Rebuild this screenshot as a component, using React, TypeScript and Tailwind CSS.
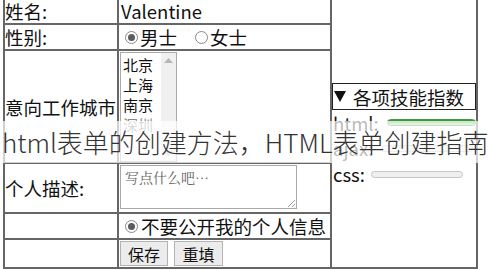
const cell = "bg-white flex items-center whitespace-nowrap";
const cjk = "font-['Noto_Sans_CJK_SC','Noto_Sans',sans-serif]";

function Radio({ checked }: { checked?: boolean }) {
  return (
    <span className="inline-flex w-[13px] h-[13px] rounded-full border border-[#8a8a8a] bg-white items-center justify-center shrink-0">
      {checked && <span className="w-[7px] h-[7px] rounded-full bg-[#5c5c5c]" />}
    </span>
  );
}

function Bar({ full }: { full?: boolean }) {
  return full ? (
    <span className="inline-block w-[89px] h-[7px] rounded-full border border-[#3f9b3f] bg-linear-to-b from-[#2f8f2f] to-[#b4dcb4]" />
  ) : (
    <span className="inline-block w-[92px] h-[7px] rounded-full border border-[#c4c4c4] bg-[#efefef]" />
  );
}

export default function App() {
  return (
    <div className={`relative w-[489px] h-[270px] overflow-hidden bg-white text-[#111] ${cjk}`}>
      <div className="ml-[3px] -mt-[3px] w-[475px] grid grid-cols-[112px_211px_144px] grid-rows-[24px_24px_111px_48px_24px_27px] gap-[2px] p-[2px] bg-[#666] text-[18.5px] leading-[22px]">
        <div className={cell}>姓名:</div>
        <div className={`${cell} pl-[2px]`}>Valentine</div>

        <div className="bg-white row-span-6 col-start-3 row-start-1 flex flex-col pt-[84px] whitespace-nowrap">
          <div className="h-[27px] border border-[#222] flex items-center gap-[7px] pl-[1px]">
            <svg width="12" height="11" viewBox="0 0 12 11">
              <polygon points="0,0 12,0 6,11" fill="#111" />
            </svg>
            <span>各项技能指数</span>
          </div>
          <div className="h-[25px] flex items-center gap-[8px] pl-[1px]">
            <span>html:</span>
            <Bar full />
          </div>
          <div className="h-[26px] flex items-center gap-[8px] pl-[1px]">
            <span>ajax:</span>
            <Bar />
          </div>
          <div className="h-[26px] flex items-center gap-[6px] pl-[1px]">
            <span>css:</span>
            <Bar />
          </div>
        </div>

        <div className={cell}>性别:</div>
        <div className={`${cell} pl-[6px] gap-[2px]`}>
          <Radio checked />
          <span>男士</span>
          <span className="w-[14px]" />
          <Radio />
          <span>女士</span>
        </div>

        <div className={cell}>意向工作城市</div>
        <div className="bg-white flex items-start pt-[1px] pl-[1px]">
          <div className="w-[57px] h-[110px] border border-[#a9a9a9] flex text-[15px] leading-[20px] whitespace-nowrap">
            <div className="flex-1 pl-[2px] pt-[2px] flex flex-col">
              <span>北京</span>
              <span>上海</span>
              <span>南京</span>
              <span className="text-[#888]">深圳</span>
            </div>
            <div className="w-[15px] bg-[#f0f0f0] flex flex-col justify-between items-center py-[5px]">
              <svg width="9" height="5" viewBox="0 0 9 5">
                <polygon points="0,5 9,5 4.5,0" fill="#b5b5b5" />
              </svg>
              <svg width="9" height="5" viewBox="0 0 9 5">
                <polygon points="0,0 9,0 4.5,5" fill="#b5b5b5" />
              </svg>
            </div>
          </div>
        </div>

        <div className={cell}>个人描述:</div>
        <div className="bg-white pt-[1px] pl-[1px]">
          <div className="relative w-[177px] h-[44px] border border-[#a9a9a9] pl-[4px] pt-[2px] text-[14px] leading-[18px] text-[#666] whitespace-nowrap font-['Noto_Serif_CJK_SC','Noto_Sans_CJK_SC',serif]">
            写点什么吧…
            <svg className="absolute right-[1px] bottom-[1px]" width="9" height="9" viewBox="0 0 9 9">
              <line x1="2" y1="9" x2="9" y2="2" stroke="#a0a0a0" />
              <line x1="6" y1="9" x2="9" y2="6" stroke="#a0a0a0" />
            </svg>
          </div>
        </div>

        <div className="bg-white" />
        <div className={`${cell} pl-[6px] gap-[3px]`}>
          <Radio checked />
          <span>不要公开我的个人信息</span>
        </div>

        <div className="bg-white" />
        <div className="bg-white flex items-start gap-[6px] pt-[1px] pl-[1px]">
          <button className="h-[25px] w-[48px] bg-[#ececec] border border-[#b3b3b3] text-[16px] leading-[20px] text-[#111]">保存</button>
          <button className="h-[25px] w-[49px] bg-[#ececec] border border-[#b3b3b3] text-[16px] leading-[20px] text-[#111]">重填</button>
        </div>
      </div>

      <div className="absolute left-0 top-[121px] w-full h-[42px] bg-white/70 pl-[2px] text-[26px] font-light leading-[42px] text-[#333] whitespace-nowrap">
        html表单的创建方法，HTML表单创建指南
      </div>
    </div>
  );
}
